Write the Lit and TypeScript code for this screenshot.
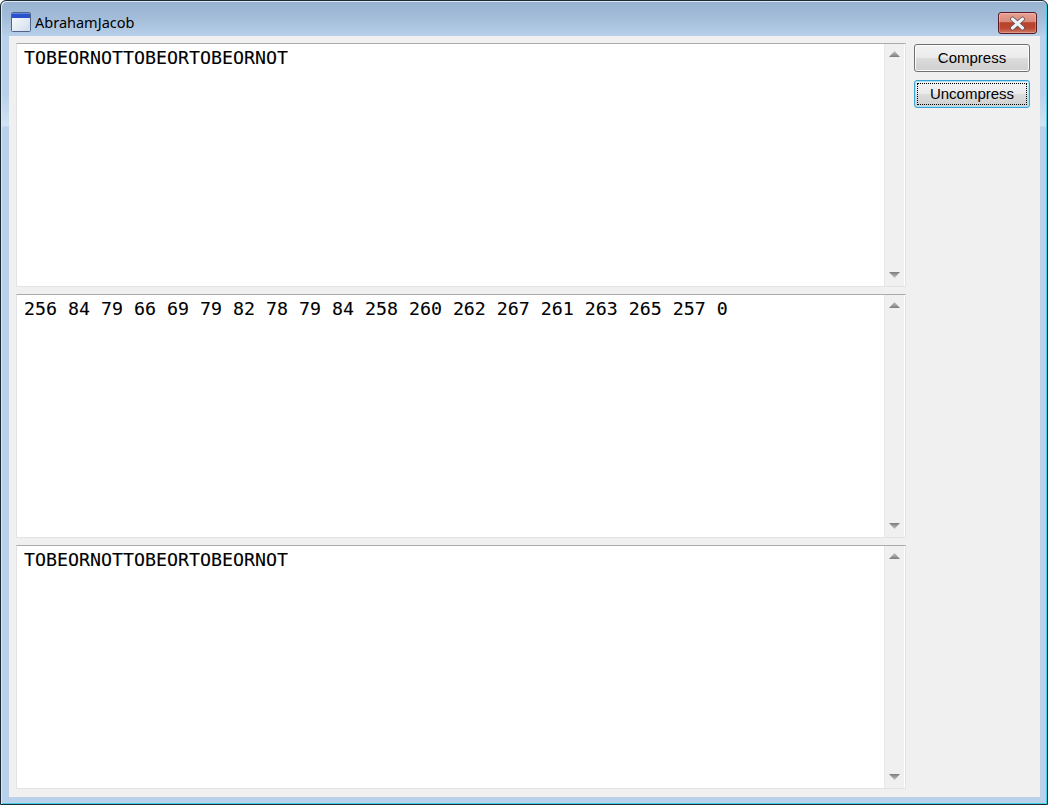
import { LitElement, html, css } from "lit";
import { customElement } from "lit/decorators.js";

@customElement("text-pane")
class TextPane extends LitElement {
  static properties = { value: {} };
  value = "";
  static styles = css`
    :host { display: flex; min-height: 0; box-sizing: border-box; border: 1px solid #e3e3e6; border-top-color: #ababab; background: #fff; }
    .text { flex: 1; padding: 3px 7px; font: 18.27px/22px "DejaVu Sans Mono", "Liberation Mono", monospace; color: #000; white-space: pre; -webkit-text-stroke: 0.1px #000; }
    .bar { width: 20px; margin-right: 1px; background: #f0f0f0; border-left: 1px solid #e8e8e8; display: flex; flex-direction: column; justify-content: space-between; align-items: center; padding: 7px 0 8px; box-sizing: border-box; }
    svg { display: block; }
  `;
  render() {
    return html`
      <div class="text">${this.value}</div>
      <div class="bar">
        <svg width="11" height="6" viewBox="0 0 11 6"><defs><linearGradient id="u" x1="0" y1="0" x2="0" y2="1"><stop offset="0" stop-color="#c4c4c4"/><stop offset="1" stop-color="#7c7c7c"/></linearGradient></defs><polygon points="5.5,0 11,6 0,6" fill="url(#u)"/></svg>
        <svg width="11" height="6" viewBox="0 0 11 6"><defs><linearGradient id="d" x1="0" y1="0" x2="0" y2="1"><stop offset="0" stop-color="#7c7c7c"/><stop offset="1" stop-color="#c4c4c4"/></linearGradient></defs><polygon points="0,0 11,0 5.5,6" fill="url(#d)"/></svg>
      </div>
    `;
  }
}

@customElement("app-root")
class AppRoot extends LitElement {
  static styles = css`
    :host { display: block; width: 1048px; height: 805px; background: #fff; }
    .window {
      box-sizing: border-box; width: 1048px; height: 805px; display: flex; flex-direction: column;
      border: 1px solid #1c2a33; border-radius: 6px 6px 0 0;
      padding: 0 7px 7px 8px;
      background: linear-gradient(180deg, #97b3d1 0, #a4bdd9 18px, #b9d1ea 36px, #b9d1ea 92px, #d2e3f3 125px, #b9d1ea 126px);
      box-shadow: inset 1px 1px 0 #dfe9f3, inset -1px -1px 0 #45d0e6;
    }
    .title { height: 35px; flex: none; display: flex; align-items: center; gap: 4px; padding: 0 1px 0 2px; }
    .icon { width: 20px; height: 20px; display: block; flex: none; margin-top: 6px; }
    .name { font: 14.5px/20px "Noto Sans", sans-serif; color: #000; margin-top: 6px; flex: 1; }
    .close {
      box-sizing: border-box; width: 39px; height: 22px; flex: none; margin-top: 9px; margin-right: 2px; border: 1px solid #5b1a24; border-radius: 3px;
      background: linear-gradient(180deg, #e8a092 0, #d98a7c 45%, #b9442c 48%, #bb452e 75%, #d27a66 100%);
      display: flex; align-items: center; justify-content: center; padding: 0;
      box-shadow: inset 0 0 0 1px rgba(255,255,255,.25);
    }
    .client { flex: 1; min-height: 0; background: #f0f0f0; padding: 7px 9px 7px 7px; display: grid; grid-template-columns: 890px 116px; column-gap: 8px; }
    .panes { display: grid; grid-template-rows: repeat(3, 244px); row-gap: 7px; }
    .actions { display: flex; flex-direction: column; gap: 8px; padding-top: 1px; }
    button.act {
      box-sizing: border-box; height: 28px; width: 116px; padding: 2px; border: 1px solid #707070; border-radius: 3px;
      background: linear-gradient(180deg, #f3f3f3 0, #ebebeb 48%, #dcdcdc 50%, #cfcfcf 100%);
      box-shadow: inset 0 0 0 1px #fcfcfc;
      font: 15px/18px "Liberation Sans", Arial, sans-serif; color: #000;
    }
    button.focus { border-color: #3c9fd4; box-shadow: inset 0 0 0 1px #a8e4f6; }
    button.act span { display: flex; height: 100%; align-items: center; justify-content: center; box-sizing: border-box; }
    button.focus span { border: 1px dotted #000; }
  `;
  render() {
    return html`
      <div class="window">
        <div class="title">
          <svg class="icon" viewBox="0 0 20 20">
            <defs><linearGradient id="b" x1="0" y1="0" x2="1" y2="1"><stop offset="0" stop-color="#ffffff"/><stop offset="1" stop-color="#cfdcec"/></linearGradient></defs>
            <rect x="0.5" y="0.5" width="19" height="19" rx="1" fill="url(#b)" stroke="#4f6488"/>
            <rect x="1" y="1" width="18" height="5" fill="#2a52cc"/>
            <rect x="1" y="1" width="18" height="1" fill="#5f86e8"/>
          </svg>
          <div class="name">AbrahamJacob</div>
          <div class="close">
            <svg width="19" height="15" viewBox="0 0 19 15"><path d="M4.5 3 L14.5 12 M14.5 3 L4.5 12" fill="none" stroke="#5a4a50" stroke-width="4.6" stroke-linecap="round"/><path d="M4.5 3 L14.5 12 M14.5 3 L4.5 12" fill="none" stroke="#eef0f4" stroke-width="3.2" stroke-linecap="round"/></svg>
          </div>
        </div>
        <div class="client">
          <div class="panes">
            <text-pane value="TOBEORNOTTOBEORTOBEORNOT"></text-pane>
            <text-pane value="256 84 79 66 69 79 82 78 79 84 258 260 262 267 261 263 265 257 0"></text-pane>
            <text-pane value="TOBEORNOTTOBEORTOBEORNOT"></text-pane>
          </div>
          <div class="actions">
            <button class="act"><span>Compress</span></button>
            <button class="act focus"><span>Uncompress</span></button>
          </div>
        </div>
      </div>
    `;
  }
}
